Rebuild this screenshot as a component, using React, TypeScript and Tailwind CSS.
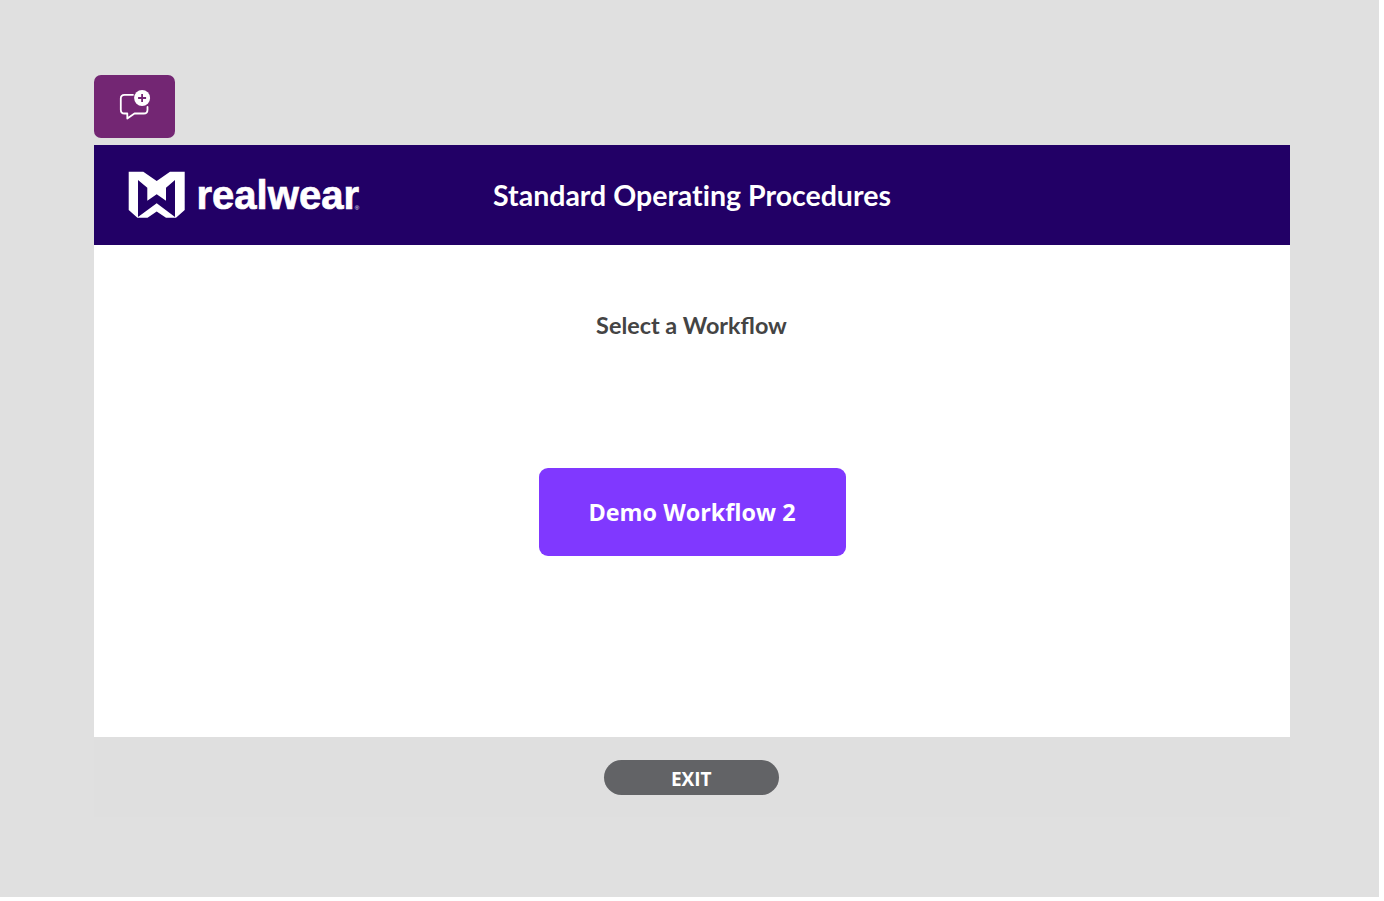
export default function App() {
  return (
    <div className="h-[901px] w-[1384px] overflow-hidden bg-white">
      <main className="flex h-[897px] w-[1379px] flex-col bg-[#e0e0e0] pl-[94px] pt-[74.5px]">
        <button aria-label="Add comment" className="flex h-[63px] w-[80.5px] items-center justify-center rounded-[7px] bg-[#732673] pb-[3px] pl-[1.5px]">
          <svg width="40" height="40" viewBox="0 0 40 40" fill="none">
            <path d="M18 9.8H9.5Q5.8 9.8 5.8 13.5V24.7Q5.8 28.5 9.5 28.5H12.3V33.5L19.5 28.5H28.8Q32.5 28.5 32.5 24.7V22" stroke="white" strokeWidth="1.8" strokeLinejoin="round" strokeLinecap="round" />
            <circle cx="27.1" cy="13" r="8" fill="white" />
            <path d="M27.1 9V17M23.1 13H31.1" stroke="#732673" strokeWidth="1.8" />
          </svg>
        </button>
        <section className="mt-[7.5px] flex w-[1196px] flex-col">
          <header className="grid h-[100px] grid-cols-[1fr_auto_1fr] items-center bg-[#220066]">
            <svg className="ml-[31px]" width="240" height="54" viewBox="0 0 240 54">
              <path fill="white" fillRule="evenodd" d="M3.7 3.7H18.3L31.7 13L45 3.7H59.7V42L51 49.7H41L31.7 43.5L22.5 49.7H12.4L3.7 42ZM13 12V49L31.7 35.3L50 49V12L41 19.7V32.7L31.7 26.3L22.3 32.7V19.7Z" />
              <text x="71.5" y="41" fill="white" stroke="white" strokeWidth="0.7" fontFamily="Liberation Sans, sans-serif" fontSize="41.5" fontWeight="700" textLength="162.5" lengthAdjust="spacingAndGlyphs">realwear</text>
              <text x="229.8" y="42" fill="white" fontFamily="Liberation Sans, sans-serif" fontSize="6">®</text>
            </svg>
            <h1 className="whitespace-nowrap font-['Lato',sans-serif] text-[28.5px] font-bold text-white [font-variant-ligatures:none]">Standard Operating Procedures</h1>
          </header>
          <div className="flex h-[492px] flex-col items-center bg-white pt-[62px]">
            <h2 className="mr-[1px] font-['Lato',sans-serif] text-[23.4px] font-bold leading-[36px] text-[#444444]">Select a Workflow</h2>
            <button className="mt-[125px] flex h-[88px] w-[307px] items-center justify-center rounded-[9px] bg-[#8038ff] pt-[2px] font-['Open_Sans',sans-serif] text-[23.4px] font-bold text-white">Demo Workflow 2</button>
          </div>
          <footer className="flex h-[80px] items-start justify-center bg-[#dfdfdf] pr-[1.5px] pt-[23px]">
            <button className="flex h-[35px] w-[175.5px] items-center justify-center rounded-full bg-[#626366] pt-[3px] font-['Open_Sans',sans-serif] text-[19px] font-bold text-white">EXIT</button>
          </footer>
        </section>
      </main>
    </div>
  );
}
